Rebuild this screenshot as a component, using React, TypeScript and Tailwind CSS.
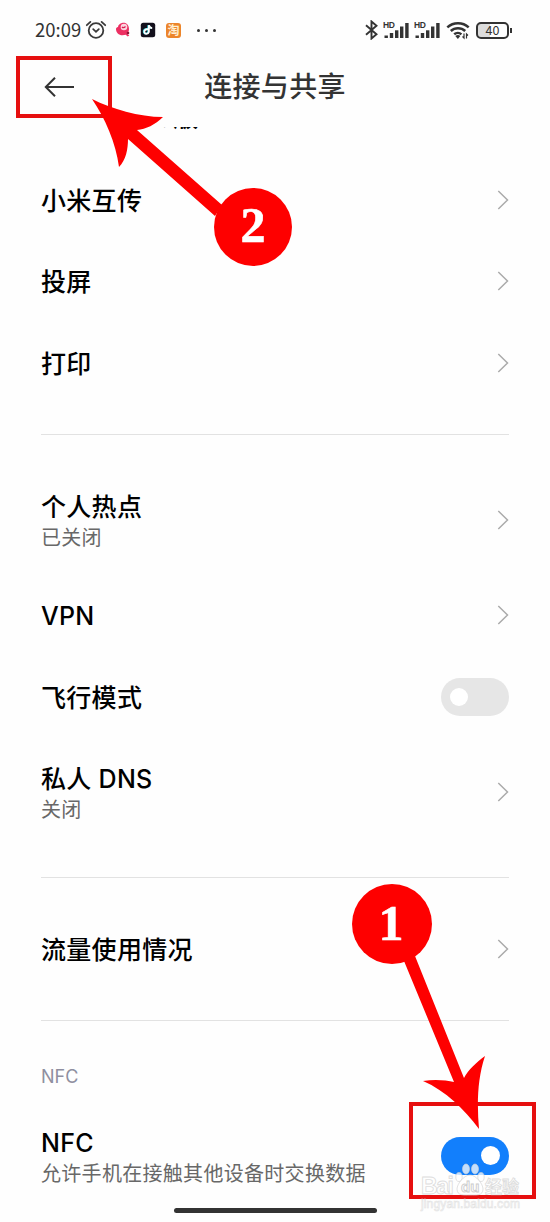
import type { ReactNode } from 'react';

function StatusBar() {
  return (
    <div className="flex h-14 items-center justify-between pt-1 pr-[38px] pl-[35px] text-[#333]">
      <div className="flex items-center">
        <span className="w-[50px] pb-[2px] font-['Noto_Sans_CJK_SC',sans-serif] text-[18.5px] leading-none">20:09</span>
        {/* Alarm */}
        <svg className="h-5 w-[22px]" viewBox="0 0 22 20" fill="none" stroke="#3a3a3a" strokeWidth="1.8" strokeLinecap="round">
          <circle cx="11" cy="10.5" r="7.3" />
          <path d="M8.2 9.2l2.8 2.6 2.8-2.6M1.8 5.2l3.6-3.3M20.2 5.2l-3.6-3.3" />
        </svg>
        {/* App notifications */}
        <svg className="ml-[8px] h-4 w-4" viewBox="0 0 16 16">
          <path d="M7 1c4-1 7 2 7 6 0 2-.8 3.6-2 4.6l2.3 2-1.6 1-2-1.8C5 14.5 1 11.5 1 7c0-1 .8-2 2-2 0-2 2-3.6 4-4z" fill="#ec2f62" />
          <circle cx="9" cy="5" r="3.3" fill="#fbd5df" />
          <path d="M7 5c1 1 2 1 3.5-.5" stroke="#d91e50" strokeWidth="1.3" fill="none" />
          <circle cx="13" cy="11" r="1.3" fill="#8d1636" />
        </svg>
        <svg className="ml-[9px] h-4 w-4" viewBox="0 0 16 16">
          <rect x=".8" y=".8" width="14.4" height="14.4" rx="2.5" fill="#13101c" />
          <path d="M7.3 7c-2.5-.3-4 1.2-3.6 3 .4 2 3.8 2.3 4.5-.2V3.3c.5 1.8 1.8 2.7 3.3 2.8" stroke="#35d5e0" strokeWidth="1.8" fill="none" />
          <path d="M8 7.3c-2.5-.3-4 1.2-3.6 3 .4 2 3.8 2.3 4.5-.2V3.3c.5 1.8 1.8 2.7 3.3 2.8" stroke="#fff" strokeWidth="1.8" fill="none" />
        </svg>
        <span className="ml-[10px] flex h-[15px] w-[15px] items-center justify-center rounded-[3px] bg-[#ec852b] font-['Noto_Sans_CJK_SC',sans-serif] text-[12px] leading-none font-bold text-[#fff0d4]">
          淘
        </span>
        <span className="ml-[16px] flex gap-[5px]">
          <i className="h-[3px] w-[3px] rounded-full bg-[#333]" />
          <i className="h-[3px] w-[3px] rounded-full bg-[#333]" />
          <i className="h-[3px] w-[3px] rounded-full bg-[#333]" />
        </span>
      </div>
      <div className="flex items-center">
        <svg className="h-5 w-[13px]" viewBox="0 0 13 20" fill="none" stroke="#333" strokeWidth="1.9">
          <path d="M1 5.2l10.5 9L6.5 18.5v-17l5 4.3-10.5 9" />
        </svg>
        <Signal className="ml-[5px]" />
        <Signal className="ml-[5px]" />
        <svg className="ml-[6px] h-[19px] w-[24px]" viewBox="0 0 24 19" fill="none" stroke="#333" strokeWidth="2.5">
          <path d="M1.3 6.3c6-5.5 15.4-5.5 21.4 0M4.8 10c4-3.7 10.4-3.7 14.4 0M8.2 13.3c2.2-1.9 5.2-1.9 7.2 0" />
          <path d="M9.3 15c1.7-1.4 3.7-1.4 5 0L11.9 18z" fill="#333" stroke="none" />
          <path d="M18 12.5v4.5l-1.5-1.5M20.5 17.5V13l1.5 1.5" strokeWidth="1.2" />
        </svg>
        <div className="ml-[6px] flex h-[17px] w-[33px] items-center justify-center rounded-[5px] border-2 border-[#333] bg-[linear-gradient(90deg,#dcdcdc_42%,#fff_42%)] font-['Noto_Sans_CJK_SC',sans-serif] text-[12.5px] leading-none">
          40
        </div>
        <i className="ml-px h-[5px] w-[2px] bg-[#333]" />
      </div>
    </div>
  );
}

function Signal({ className }: { className: string }) {
  return (
    <svg className={`h-[18px] w-[26px] ${className}`} viewBox="0 0 26 18" fill="#333">
      <text x="0" y="7" fontSize="8.5" fontWeight="bold" fontFamily="Liberation Sans, sans-serif" textLength="12">
        HD
      </text>
      <rect x="1.5" y="14.5" width="3.4" height="2.5" />
      <rect x="6.8" y="12" width="3.4" height="5" />
      <rect x="12" y="9.3" width="3.4" height="7.7" />
      <rect x="17" y="5.5" width="3.4" height="11.5" />
      <rect x="22.2" y="2" width="3.4" height="15" />
    </svg>
  );
}

function Chevron() {
  return (
    <svg className="h-5 w-3" viewBox="0 0 12 20" fill="none" stroke="#ababab" strokeWidth="1.5">
      <path d="M1.3 1l9.2 9-9.2 9" />
    </svg>
  );
}

function Toggle({ on }: { on?: boolean }) {
  return (
    <div className={`flex h-[38px] w-[68px] items-center rounded-full px-[9px] ${on ? 'justify-end bg-[#127ffc]' : 'bg-[#e6e6e6]'}`}>
      <i className={`rounded-full bg-white ${on ? 'h-[19px] w-[19px]' : 'h-[18px] w-[18px]'}`} />
    </div>
  );
}

function Row({ title, sub, children }: { title: string; sub?: string; children?: ReactNode }) {
  return (
    <div className={`flex items-center justify-between ${sub ? 'h-[109px]' : 'h-[81.5px]'}`}>
      <div className={sub ? 'pt-[4px]' : 'pt-[2px]'}>
        <div className="text-[25px] leading-8 font-medium tracking-[0.3px] text-black">{title}</div>
        {sub && <div className="text-[20px] leading-[30px] tracking-[0.3px] text-[#686868]">{sub}</div>}
      </div>
      {children ?? <Chevron />}
    </div>
  );
}

function Divider() {
  return <div className="mt-[30px] mb-[31px] h-px bg-[#e2e2e2]" />;
}

function Annotations() {
  return (
    <svg className="pointer-events-none absolute inset-0 h-[1222px] w-[550px]" viewBox="0 0 550 1222">
      <g fill="none" stroke="#e60f0f" strokeWidth="4">
        <rect x="18" y="58" width="92" height="58" />
        <rect x="411" y="1104" width="123" height="93" />
      </g>
      <g fill="#fe0000">
        <path d="M92 99C112 109 139 117 163 117C155 125 146 129 137 130L222 205L215 216L128 139C128 149 126 160 119 167C116 143 105 118 92 99Z" />
        <circle cx="253" cy="227" r="39" />
        <path d="M415 956L464 1078C468 1070 477 1062 485 1056C477 1080 477 1105 479 1129C464 1109 446 1091 423 1081C434 1079 446 1080 454 1082L404 961Z" />
        <circle cx="392" cy="924" r="40" />
      </g>
      <g fill="#fff" stroke="#fff" strokeWidth=".6" fontFamily="Liberation Serif, serif" fontWeight="bold" fontSize="50" textAnchor="middle">
        <text x="253" y="242">2</text>
        <text x="391" y="940">1</text>
      </g>
    </svg>
  );
}

function Watermark() {
  return (
    <svg className="pointer-events-none absolute top-[1155px] left-[415px] h-[60px] w-[115px]" viewBox="0 0 115 60">
      <g fill="#fff" fillOpacity=".75" stroke="#cfcfcf" strokeOpacity=".7" strokeWidth=".9" fontFamily="Liberation Sans, sans-serif">
        <ellipse cx="51" cy="14" rx="3.5" ry="5" />
        <ellipse cx="60" cy="14" rx="3.5" ry="5" />
        <ellipse cx="44" cy="22" rx="3.2" ry="4.5" />
        <ellipse cx="66" cy="22" rx="3.2" ry="4.5" />
        <path d="M55 20c6 0 13 9 13 14 0 7-7 6-13 6s-13 1-13-6c0-5 7-14 13-14z" />
        <text x="6" y="39" fontSize="23" fontWeight="bold" textLength="33">Bai</text>
        <text x="70" y="38" fontSize="17" fontWeight="bold" fontFamily="Noto Sans CJK SC, sans-serif">经验</text>
      </g>
      <text x="46" y="37" fontSize="15" fontFamily="Liberation Sans, sans-serif" fontWeight="bold" fill="#fff" stroke="#ccc" strokeWidth=".9">
        du
      </text>
      <text x="6" y="53" fontSize="12" fontFamily="Liberation Sans, sans-serif" fill="#fff" fillOpacity=".8" stroke="#e2e2e2" strokeWidth=".6" textLength="99">
        jingyan.baidu.com
      </text>
    </svg>
  );
}

export default function App() {
  return (
    <div className="relative h-[1222px] w-[550px] overflow-hidden bg-[#fefefe] font-[Inter,'Noto_Sans_CJK_SC',sans-serif]">
      <StatusBar />
      <header className="grid h-[62px] grid-cols-[150px_1fr_150px] items-center">
        <svg className="ml-[44px] h-5 w-[31px]" viewBox="0 0 31 20" fill="none" stroke="#333" strokeWidth="2">
          <path d="M30 10H2M11 .8L1.8 10l9.2 9.2" />
        </svg>
        <h1 className="text-center text-[28px] leading-none font-medium tracking-[0.3px] text-[#333]">连接与共享</h1>
      </header>
      <main className="mt-[9px] pr-[41px] pl-[41px]">
        {/* Row scrolled away under the header */}
        <div className="flex h-[32px] items-start overflow-hidden">
          <div className="-mt-[25.5px] text-[25px] leading-8 font-medium text-black">MIUI+ Beta版</div>
        </div>
        <Row title="小米互传" />
        <Row title="投屏" />
        <Row title="打印" />
        <Divider />
        <Row title="个人热点" sub="已关闭" />
        <Row title="VPN" />
        <Row title="飞行模式">
          <Toggle />
        </Row>
        <Row title="私人 DNS" sub="关闭" />
        <Divider />
        <Row title="流量使用情况" />
        <Divider />
        <div className="mt-[41px] h-[39px] text-[18px] leading-[30px] text-[#8f8fa0]">NFC</div>
        <Row title="NFC" sub="允许手机在接触其他设备时交换数据">
          <Toggle on />
        </Row>
      </main>
      <div className="mx-auto -mt-[2px] h-[5px] w-[203px] rounded-full bg-[#333]" />
      <Annotations />
      <Watermark />
    </div>
  );
}
